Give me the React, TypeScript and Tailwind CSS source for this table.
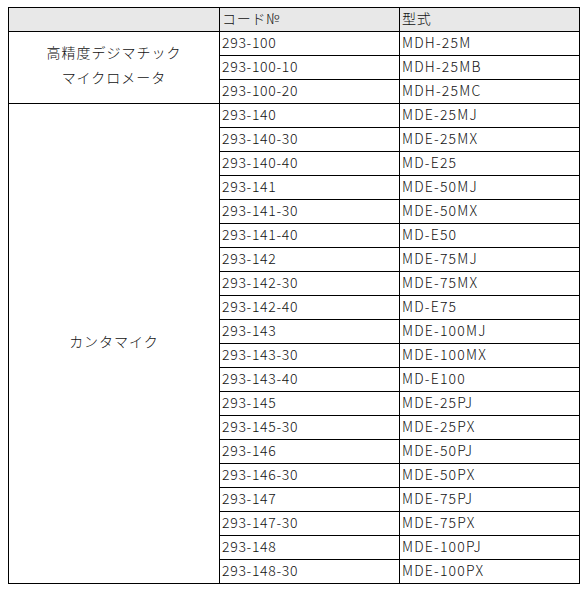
const groups = [
  {
    name: ["高精度デジマチック", "マイクロメータ"],
    rows: [
      ["293-100", "MDH-25M"],
      ["293-100-10", "MDH-25MB"],
      ["293-100-20", "MDH-25MC"],
    ],
  },
  {
    name: ["カンタマイク"],
    rows: [
      ["293-140", "MDE-25MJ"],
      ["293-140-30", "MDE-25MX"],
      ["293-140-40", "MD-E25"],
      ["293-141", "MDE-50MJ"],
      ["293-141-30", "MDE-50MX"],
      ["293-141-40", "MD-E50"],
      ["293-142", "MDE-75MJ"],
      ["293-142-30", "MDE-75MX"],
      ["293-142-40", "MD-E75"],
      ["293-143", "MDE-100MJ"],
      ["293-143-30", "MDE-100MX"],
      ["293-143-40", "MD-E100"],
      ["293-145", "MDE-25PJ"],
      ["293-145-30", "MDE-25PX"],
      ["293-146", "MDE-50PJ"],
      ["293-146-30", "MDE-50PX"],
      ["293-147", "MDE-75PJ"],
      ["293-147-30", "MDE-75PX"],
      ["293-148", "MDE-100PJ"],
      ["293-148-30", "MDE-100PX"],
    ],
  },
];

export default function App() {
  return (
    <div className="bg-white min-h-screen pl-[8px] pt-[7px] font-['Noto_Sans_CJK_JP',sans-serif] text-[14px] font-light text-[#111]">
      <table className="table-fixed border-collapse w-[571px]">
        <colgroup>
          <col className="w-[211px]" />
          <col className="w-[180px]" />
          <col className="w-[180px]" />
        </colgroup>
        <thead>
          <tr className="h-[24px] bg-[#e8e8e8]">
            <th className="border border-black p-0" />
            <th className="border border-black px-[2px] pt-0 pb-[3px] text-left font-light leading-[18px] tracking-[0.7px]">
              コード№
            </th>
            <th className="border border-black px-[2px] pt-0 pb-[3px] text-left font-light leading-[18px] tracking-[0.7px]">
              型式
            </th>
          </tr>
        </thead>
        <tbody>
          {groups.map((g) =>
            g.rows.map((r, i) => (
              <tr key={r[0]} className="h-[24px]">
                {i === 0 && (
                  <td
                    rowSpan={g.rows.length}
                    className="border border-black px-0 pt-0 pb-[5px] text-center leading-[25px] tracking-[1px]"
                  >
                    {g.name.map((n) => (
                      <div key={n}>{n}</div>
                    ))}
                  </td>
                )}
                <td className="border border-black px-[2px] pt-0 pb-[3px] leading-[18px] tracking-[0.7px]">
                  {r[0]}
                </td>
                <td className="border border-black px-[2px] pt-0 pb-[3px] leading-[18px] tracking-[1.2px]">
                  {r[1]}
                </td>
              </tr>
            ))
          )}
        </tbody>
      </table>
    </div>
  );
}
